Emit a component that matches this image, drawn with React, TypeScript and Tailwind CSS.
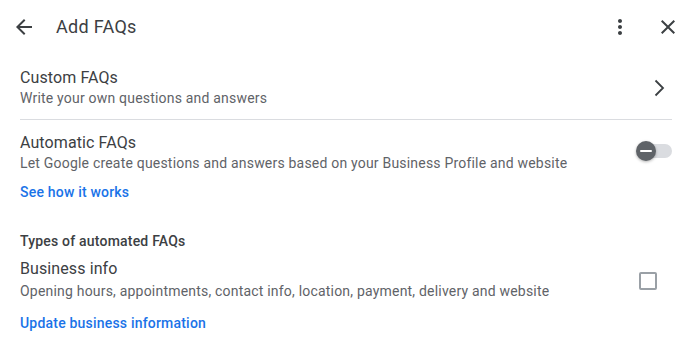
import React from 'react';

const font = { fontFamily: 'Roboto, "Noto Sans", Arial, sans-serif' };

export default function App() {
  return (
    <div className="w-[689px] h-[358px] bg-white text-[#3c4043] overflow-hidden" style={font}>
      {/* Header */}
      <div className="flex items-center h-[54px] pl-[12px] pr-[9px]">
        <button className="w-[24px] h-[24px] flex items-center justify-center">
          <svg width="24" height="24" viewBox="0 0 24 24" fill="#3c4043">
            <path d="M20 11H7.83l5.59-5.59L12 4l-8 8 8 8 1.41-1.41L7.83 13H20v-2z" />
          </svg>
        </button>
        <h1 className="ml-[20px] text-[18px] leading-[24px] tracking-[0.3px] text-[#3c4043]">Add FAQs</h1>
        <div className="ml-auto flex items-center gap-[24px]">
          <svg width="24" height="24" viewBox="0 0 24 24" fill="#3c4043">
            <path d="M12 8c1.1 0 2-.9 2-2s-.9-2-2-2-2 .9-2 2 .9 2 2 2zm0 2c-1.1 0-2 .9-2 2s.9 2 2 2 2-.9 2-2-.9-2-2-2zm0 6c-1.1 0-2 .9-2 2s.9 2 2 2 2-.9 2-2-.9-2-2-2z" />
          </svg>
          <svg width="24" height="24" viewBox="0 0 24 24" fill="#3c4043">
            <path d="M19 6.41L17.59 5 12 10.59 6.41 5 5 6.41 10.59 12 5 17.59 6.41 19 12 13.41 17.59 19 19 17.59 13.41 12z" />
          </svg>
        </div>
      </div>

      <div className="pl-[20px] pr-[17px]">
        {/* Custom FAQs */}
        <div className="flex items-center pt-[14px] pb-[11px] border-b border-[#dadce0]">
          <div className="flex-1">
            <div className="text-[16px] leading-[20px] tracking-[0.1px]">Custom FAQs</div>
            <div className="text-[14px] leading-[20px] tracking-[0.2px] text-[#5f6368]">Write your own questions and answers</div>
          </div>
          <svg width="24" height="24" viewBox="0 0 24 24" fill="none" stroke="#3c4043" strokeWidth="1.8" className="mr-[2px]">
            <path d="M9.5 4.5L17 12l-7.5 7.5" />
          </svg>
        </div>

        {/* Automatic FAQs */}
        <div className="flex items-start pt-[13px]">
          <div className="flex-1">
            <div className="text-[16px] leading-[20px] tracking-[0.1px]">Automatic FAQs</div>
            <div className="text-[14px] leading-[20px] tracking-[0.2px] text-[#5f6368]">
              Let Google create questions and answers based on your Business Profile and website
            </div>
          </div>
          <div className="relative w-[36px] h-[20px] mt-[8px] flex items-center">
            <div className="ml-[4px] w-[32px] h-[14px] rounded-full bg-[#dadce0]" />
            <div className="absolute left-0 top-0 w-[20px] h-[20px] rounded-full bg-[#5f6368] shadow-[0_1px_3px_rgba(0,0,0,0.3)] flex items-center justify-center">
              <div className="w-[12px] h-[2px] bg-white rounded" />
            </div>
          </div>
        </div>
        <div className="mt-[9px] text-[14px] leading-[20px] tracking-[0.2px] font-medium text-[#1a73e8]">See how it works</div>

        {/* Types */}
        <div className="mt-[29px] text-[14px] leading-[20px] tracking-[0.2px] font-medium text-[#3c4043]">Types of automated FAQs</div>
        <div className="flex items-start mt-[8px]">
          <div className="flex-1">
            <div className="text-[16px] leading-[20px] tracking-[0.1px]">Business info</div>
            <div className="mt-[2px] text-[14px] leading-[20px] tracking-[0.2px] text-[#5f6368]">
              Opening hours, appointments, contact info, location, payment, delivery and website
            </div>
          </div>
          <div className="mt-[13px] w-[18px] h-[18px] border-2 border-[#9aa0a6] rounded-[2px] mr-[15px]" />
        </div>
        <div className="mt-[12px] text-[14px] leading-[20px] tracking-[0.2px] font-medium text-[#1a73e8]">Update business information</div>
      </div>
    </div>
  );
}
